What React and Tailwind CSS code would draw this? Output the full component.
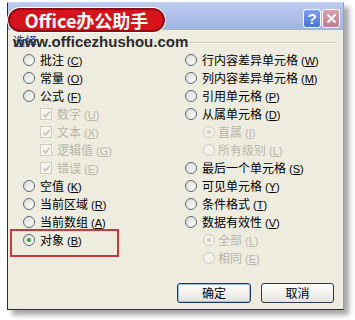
import React from "react";

const font = { fontFamily: '"Noto Sans CJK SC", "Noto Sans", sans-serif' };

function Radio({ checked, disabled }) {
  return (
    <span
      className={
        "flex h-[12px] w-[12px] shrink-0 items-center justify-center rounded-full border " +
        (disabled
          ? "border-[#cfcdc0] bg-[#f3f2ea]"
          : "border-[#5a6878] bg-gradient-to-br from-[#dcdcd4] to-[#ffffff]")
      }
    >
      {checked && (
        <span
          className={
            "h-[4px] w-[4px] rounded-full " +
            (disabled ? "bg-[#cfcdc0]" : "bg-[#2aa22a]")
          }
        />
      )}
    </span>
  );
}

function Check() {
  return (
    <span className="flex h-[12px] w-[12px] shrink-0 items-center justify-center border border-[#cfcdc0] bg-[#f5f4ee]">
      <svg width="9" height="9" viewBox="0 0 9 9">
        <path d="M1.5 4.5 L3.5 6.8 L7.8 1.8" fill="none" stroke="#c2c0b2" strokeWidth="1.6" />
      </svg>
    </span>
  );
}

function Label({ t, k, disabled }) {
  return (
    <span
      className={
        "whitespace-nowrap text-[12px] leading-[14px] " +
        (disabled ? "text-[#b8b6aa]" : "text-black")
      }
    >
      {t}
      <span
        className="ml-[3px] text-[11px]"
        style={{ fontFamily: '"Liberation Sans", sans-serif' }}
      >
        (<span className="underline">{k}</span>)
      </span>
    </span>
  );
}

const left = [
  { type: "radio", t: "批注", k: "C" },
  { type: "radio", t: "常量", k: "O" },
  { type: "radio", t: "公式", k: "F" },
  { type: "check", t: "数字", k: "U" },
  { type: "check", t: "文本", k: "X" },
  { type: "check", t: "逻辑值", k: "G" },
  { type: "check", t: "错误", k: "E" },
  { type: "radio", t: "空值", k: "K" },
  { type: "radio", t: "当前区域", k: "R" },
  { type: "radio", t: "当前数组", k: "A" },
  { type: "radio", t: "对象", k: "B", checked: true },
];

const right = [
  { type: "radio", t: "行内容差异单元格", k: "W" },
  { type: "radio", t: "列内容差异单元格", k: "M" },
  { type: "radio", t: "引用单元格", k: "P" },
  { type: "radio", t: "从属单元格", k: "D" },
  { type: "sub", t: "直属", k: "I", checked: true },
  { type: "sub", t: "所有级别", k: "L" },
  { type: "radio", t: "最后一个单元格", k: "S" },
  { type: "radio", t: "可见单元格", k: "Y" },
  { type: "radio", t: "条件格式", k: "T" },
  { type: "radio", t: "数据有效性", k: "V" },
  { type: "sub", t: "全部", k: "L", checked: true },
  { type: "sub", t: "相同", k: "E" },
];

function Row({ item }) {
  if (item.type === "check") {
    return (
      <div className="flex h-[18px] items-center gap-[5px] pl-[17px]">
        <Check />
        <Label t={item.t} k={item.k} disabled />
      </div>
    );
  }
  if (item.type === "sub") {
    return (
      <div className="flex h-[18px] items-center gap-[3px] pl-[18px]">
        <Radio checked={item.checked} disabled />
        <Label t={item.t} k={item.k} disabled />
      </div>
    );
  }
  return (
    <div className="flex h-[18px] items-center gap-[5px]">
      <Radio checked={item.checked} />
      <Label t={item.t} k={item.k} />
    </div>
  );
}

export default function App() {
  return (
    <div className="h-[320px] w-[355px] overflow-hidden bg-white pl-[7px] pt-[2px]" style={font}>
      <div className="relative flex h-[308px] w-[337px] flex-col border border-[#1b2b78] border-t-[#c9d4ee] border-r-[#8f9fc8] bg-[#eeecdf] shadow-[5px_5px_5px_rgba(0,0,0,0.35)]">
        {/* title bar */}
        <div className="relative flex h-[27px] shrink-0 items-start bg-gradient-to-b from-[#bccbee] to-[#9fb3e2] pt-[5px]">
          <div className="z-10 flex h-[24px] w-[157px] items-center justify-center rounded-full border-[2px] border-[#8e0c12] bg-[#d3141c] shadow-[0_0_0_1px_#ffffff] ml-[0px]">
            <span
              className="text-[18px] font-bold leading-none tracking-[0px] text-white"
              style={{ fontFamily: '"Noto Sans CJK SC", "Open Sans", sans-serif' }}
            >
              Office办公助手
            </span>
          </div>
          <div className="ml-auto mr-[3px] mt-[1px] flex gap-[1px]">
            <div className="flex h-[19px] w-[18px] items-center justify-center rounded-[3px] border border-white bg-gradient-to-b from-[#7ea0e8] to-[#4a74d4]">
              <span className="text-[15px] font-bold leading-none text-white" style={{ fontFamily: '"Liberation Sans", sans-serif' }}>?</span>
            </div>
            <div className="flex h-[19px] w-[18px] items-center justify-center rounded-[3px] border border-white bg-gradient-to-b from-[#d9a2b0] to-[#c27c90]">
              <svg width="11" height="11" viewBox="0 0 11 11">
                <path d="M1.5 1.5 L9.5 9.5 M9.5 1.5 L1.5 9.5" stroke="#ffffff" strokeWidth="2" />
              </svg>
            </div>
          </div>
        </div>

        {/* group label line */}
        <div className="relative h-[21px] shrink-0">
          <div className="flex items-center pl-[5px] pt-[4px]">
            <span className="text-[12px] leading-[14px] text-[#2c3f9c]">选择</span>
            <div className="ml-[4px] mr-[6px] mt-[4px] h-[2px] flex-1 border-t border-b border-t-[#d0cebf] border-b-white" />
          </div>
          <span
            className="absolute left-[5px] top-[4px] text-[15px] font-bold leading-[16px] text-[#2b2b2b]"
            style={{ fontFamily: '"Liberation Sans", sans-serif' }}
          >
            www.officezhushou.com
          </span>
        </div>

        {/* options */}
        <div className="flex">
          <div className="w-[177px] pl-[15px]">
            {left.map((it, i) => (
              <Row key={i} item={it} />
            ))}
          </div>
          <div className="flex-1">
            {right.map((it, i) => (
              <Row key={i} item={it} />
            ))}
          </div>
        </div>

        {/* buttons */}
        <div className="mt-[16px] flex gap-[10px] pl-[169px]">
          <div className="flex h-[20px] w-[74px] items-center justify-center rounded-[3px] border border-[#1c3a6c] bg-gradient-to-b from-[#ffffff] to-[#e4e3da] shadow-[inset_0_0_0_1px_#9ebbef]">
            <span className="text-[12px] leading-none text-black">确定</span>
          </div>
          <div className="flex h-[20px] w-[73px] items-center justify-center rounded-[3px] border border-[#2a3a50] bg-gradient-to-b from-[#ffffff] to-[#e4e3da]">
            <span className="text-[12px] leading-none text-black">取消</span>
          </div>
        </div>

        {/* red annotation box */}
        <div className="absolute left-[2px] top-[226px] h-[28px] w-[109px] border-2 border-[#c63a3e]" />
      </div>
    </div>
  );
}
